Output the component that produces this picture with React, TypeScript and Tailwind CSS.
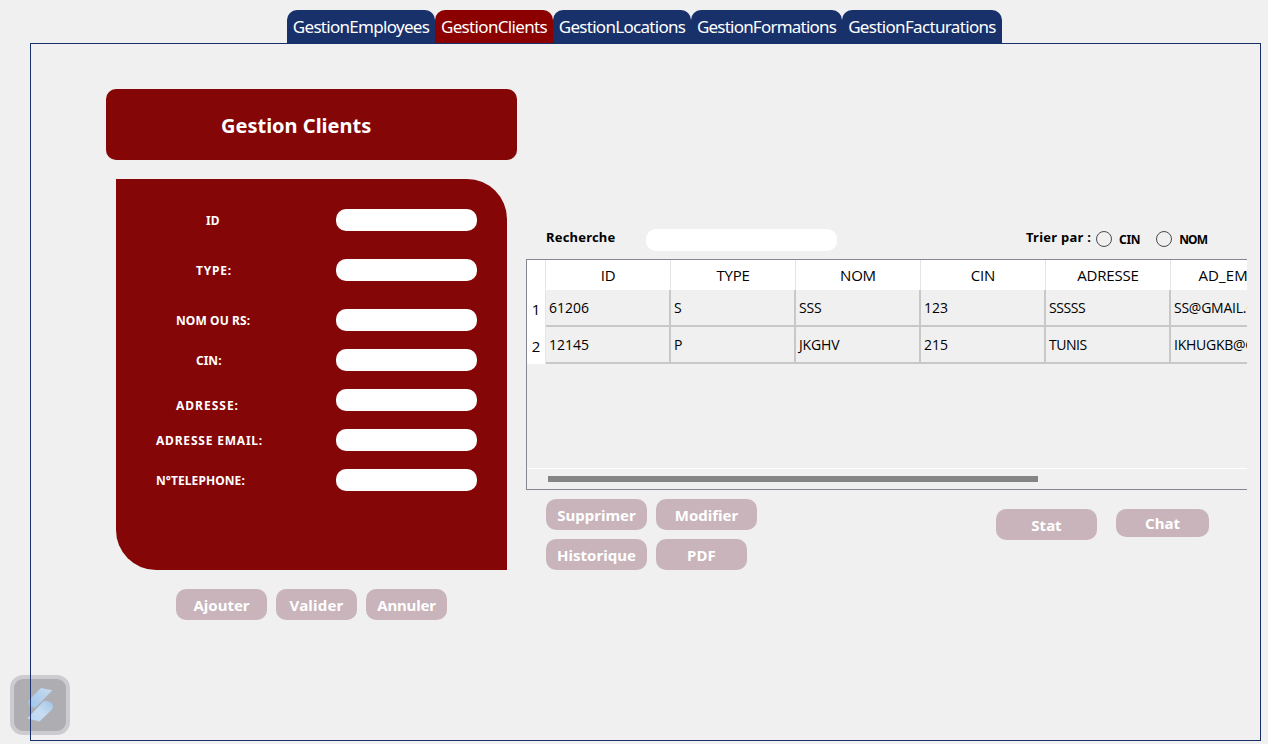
import React from "react";

const tabs = [
  { label: "GestionEmployees", cls: "w-[148px] bg-[#18316b]", text: "tracking-[-0.7px]" },
  { label: "GestionClients", cls: "w-[118px] bg-[#8b0000]", text: "tracking-[-0.66px]" },
  { label: "GestionLocations", cls: "w-[138px] bg-[#18316b]", text: "tracking-[-0.7px]" },
  { label: "GestionFormations", cls: "w-[151px] bg-[#18316b]", text: "tracking-[-0.78px]" },
  { label: "GestionFacturations", cls: "w-[160px] bg-[#18316b]", text: "tracking-[-0.66px]" },
];

const fields = [
  { label: "ID", row: "pl-[90px]", text: "pt-[2px]" },
  { label: "TYPE:", row: "pl-20 mt-7", text: "pt-[2px] tracking-[0.8px]" },
  { label: "NOM OU RS:", row: "pl-[60px] mt-7", text: "pt-[2px] tracking-[0.1px]" },
  { label: "CIN:", row: "pl-20 mt-[18px]", text: "pt-[2px]" },
  { label: "ADRESSE:", row: "pl-[60px] mt-[18px]", text: "pt-[12px] tracking-[1px]" },
  { label: "ADRESSE EMAIL:", row: "pl-10 mt-[18px]", text: "pt-[2px] tracking-[0.8px]" },
  { label: "N°TELEPHONE:", row: "pl-10 mt-[18px]", text: "pt-[2px] tracking-[0.08px]" },
];

const columns = ["ID", "TYPE", "NOM", "CIN", "ADRESSE", "AD_EMAIL"];
const rows = [
  ["61206", "S", "SSS", "123", "SSSSS", "SS@GMAIL.COM"],
  ["12145", "P", "JKGHV", "215", "TUNIS", "IKHUGKB@GMAIL"],
];
const cellTracking = [
  "",
  "",
  "tracking-[-0.15px]",
  "",
  "tracking-[-0.45px]",
  "tracking-[-0.25px]",
];

function Button({ children, className }: { children: React.ReactNode; className: string }) {
  return (
    <button
      className={`flex items-center justify-center rounded-[10px] bg-[#c8b4ba] text-[15px] leading-none font-bold whitespace-nowrap text-white ${className}`}
    >
      {children}
    </button>
  );
}

function Radio({ label, text }: { label: string; text: string }) {
  return (
    <label className="flex items-start">
      <span className="h-4 w-4 rounded-full border border-[#4a4a4a]" />
      <span className={`ml-[7px] pt-px text-[12px] leading-4 font-bold ${text}`}>{label}</span>
    </label>
  );
}

function Logo() {
  return (
    <div className="absolute top-[675px] left-[10px] h-[60px] w-[60px] rounded-[13px] border-4 border-[#ccccd0] bg-[#adadb2]">
      <svg viewBox="0 0 52 52" className="h-[52px] w-[52px]">
        <defs>
          <linearGradient id="up" x1="0" y1="1" x2="1" y2="0">
            <stop offset="0" stopColor="#9fc3ea" />
            <stop offset="1" stopColor="#c8dcee" />
          </linearGradient>
          <linearGradient id="down" x1="0" y1="1" x2="1" y2="0">
            <stop offset="0" stopColor="#bcd8f3" />
            <stop offset="0.5" stopColor="#c5dcf2" />
            <stop offset="1" stopColor="#a3c5e8" />
          </linearGradient>
        </defs>
        <path d="M27 9 L38.4 11.3 L21.6 28.6 C18.5 29 14.4 27.5 14.4 23.8 C14.4 22 15 21 16.2 19.8 Z" fill="url(#up)" />
        <path d="M13.3 39.6 L29.8 22 C34.5 21.8 38.9 23.5 38.9 27.5 C38.9 29.3 38.2 30.3 37 31.5 L25.5 42.4 Z" fill="url(#down)" />
      </svg>
    </div>
  );
}

export default function App() {
  return (
    <div className="relative h-[744px] w-[1268px] overflow-hidden bg-[#f0f0f0] pt-[10px] font-['Noto_Sans',sans-serif] text-black">
      <Logo />
      <nav className="relative flex h-[33px] pl-[287px]">
        {tabs.map((t) => (
          <div
            key={t.label}
            className={`flex h-[33px] items-center justify-center rounded-t-[10px] text-[17px] leading-none whitespace-nowrap text-white ${t.cls}`}
          >
            <span className={t.text}>{t.label}</span>
          </div>
        ))}
      </nav>
      <main className="relative ml-[30px] flex h-[698px] w-[1231px] border border-[#18316b] pl-[75px]">
        <section className="mt-[45px] w-[411px]">
          <h1 className="flex h-[71px] items-center rounded-[10px] bg-[#850607] pt-[2px] pl-[115px] text-[20px] leading-none font-bold text-white">
            <span className="whitespace-nowrap">Gestion Clients</span>
          </h1>
          <div className="mt-[19px] ml-[10px] h-[391px] w-[391px] rounded-tr-[40px] rounded-bl-[40px] bg-[#850607] pt-[30px]">
            {fields.map((f) => (
              <div key={f.label} className={`flex h-[22px] w-[361px] items-center justify-between ${f.row}`}>
                <span className={`text-[12px] leading-none font-bold whitespace-nowrap text-white ${f.text}`}>{f.label}</span>
                <input className="h-[22px] w-[141px] rounded-[10px] bg-white outline-none" />
              </div>
            ))}
          </div>
          <div className="mt-[19px] ml-[70px] flex gap-[9px]">
            <Button className="h-[31px] w-[91px] pt-[2px]">Ajouter</Button>
            <Button className="h-[31px] w-[81px] pt-[2px] tracking-[0.2px]">Valider</Button>
            <Button className="h-[31px] w-[81px] pt-[2px] tracking-[-0.2px]">Annuler</Button>
          </div>
        </section>
        <section className="mt-[185px] ml-[9px] w-[721px]">
          <div className="flex h-[22px] items-start pl-5">
            <span className="w-[100px] text-[13px] leading-[17px] font-bold tracking-[0.2px]">Recherche</span>
            <input className="h-[22px] w-[191px] rounded-[10px] bg-white outline-none" />
            <span className="ml-[188px] w-[71px] pl-px text-[13px] leading-[17px] font-bold tracking-[0.25px] whitespace-nowrap">Trier par :</span>
            <div className="flex gap-4 pt-[2px]">
              <Radio label="CIN" text="tracking-[-0.3px]" />
              <Radio label="NOM" text="tracking-[-0.9px]" />
            </div>
          </div>
          <div className="mt-2 flex h-[231px] w-[721px] flex-col overflow-hidden border-y border-l border-[#828790] font-['Open_Sans',sans-serif] text-[15px]">
            <div className="flex h-[30px] bg-white">
              <div className="w-[19px] shrink-0 border-r border-[#e5e5e5]" />
              {columns.map((c) => (
                <div key={c} className="flex w-[125px] shrink-0 items-center justify-center border-r border-[#e5e5e5] tracking-[-0.2px] last:pl-[2px] last:tracking-[0.1px]">
                  {c}
                </div>
              ))}
            </div>
            {rows.map((r, i) => (
              <div key={r[0]} className="flex h-[37px]">
                <div className="flex w-[19px] shrink-0 items-center justify-center border-r border-[#e5e5e5] bg-white pt-[2px]">{i + 1}</div>
                {r.map((c, j) => (
                  <div
                    key={j}
                    className={`flex w-[125px] shrink-0 items-center border-r-2 border-b-2 border-[#c8c8c8] pl-[3px] text-[14px] ${cellTracking[j]}`}
                  >
                    {c}
                  </div>
                ))}
              </div>
            ))}
            <div className="mt-[104px] h-px shrink-0 bg-white" />
            <div className="mt-[7px] ml-[21px] h-[6px] w-[490px] shrink-0 bg-[#858585]" />
          </div>
          <div className="mt-[9px] flex pl-5">
            <div className="grid grid-cols-[101px_101px] gap-x-[9px] gap-y-[9px]">
              <Button className="h-[31px] w-[101px] pt-[2px]">Supprimer</Button>
              <Button className="h-[31px] w-[101px] pt-[2px]">Modifier</Button>
              <Button className="h-[31px] w-[101px] pt-[2px]">Historique</Button>
              <Button className="h-[31px] w-[91px] pt-[2px] tracking-[0.2px]">PDF</Button>
            </div>
            <div className="mt-[10px] ml-[239px] flex items-start gap-[19px]">
              <Button className="h-[31px] w-[101px] pt-[2px]">Stat</Button>
              <Button className="h-[28px] w-[93px]">Chat</Button>
            </div>
          </div>
        </section>
      </main>
    </div>
  );
}
